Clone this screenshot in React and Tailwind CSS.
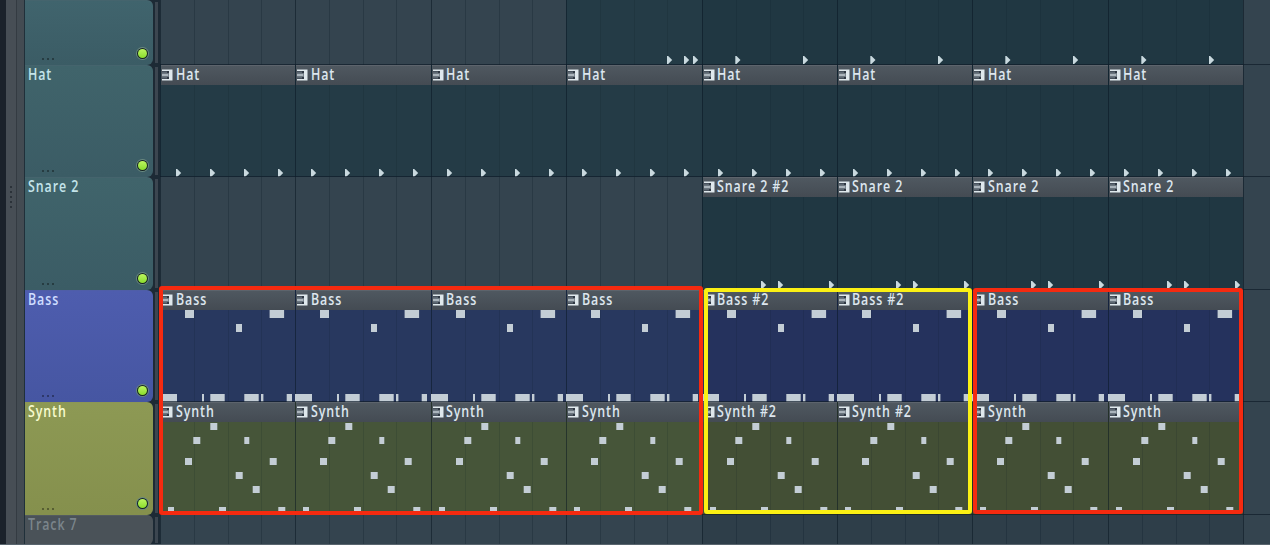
const TRI = { kickA: [101, 118, 127], kick: [33.3, 101], hat: [16, 50, 84, 118], snare: [59, 76, 127] };

const BASS = [
  [25, 20, 9, 8], [109.6, 20, 14.5, 8], [76, 34, 6, 8],
  [0, 104, 17, 8], [42, 104, 2, 8], [50.3, 104, 14.4, 8], [84.3, 104, 14.4, 8], [101, 104, 2.4, 8], [126.7, 104, 5.3, 8],
];

const SYNTH = [
  [50.3, 21, 7, 7], [33.3, 35, 7, 7], [84.3, 35, 5, 7], [25, 56, 7, 7], [109.7, 56, 7, 7],
  [75.7, 70, 7, 7], [92.7, 84, 7, 7], [8, 105, 6, 6], [59, 105, 7, 6], [118.3, 105, 7, 6],
];

const tone = {
  empty: ["bg-transparent", "bg-[#2e3e49]"],
  drum: ["bg-[#243b46]", "bg-[#203742]"],
  bass: ["bg-[#28385f]", "bg-[#25325d]"],
  synth: ["bg-[#465539]", "bg-[#434f35]"],
};

const clips = (kind, names, tris, notes) => names.map((name) => ({ kind, name, tris, notes }));
const blank = (n) => Array.from({ length: n }, () => ({ kind: "empty" }));
const names = (a) => [a, a, a, a, `${a} #2`, `${a} #2`, a, a];

const TRACKS = [
  {
    name: "", height: "h-[65px]", color: "bg-linear-to-b from-[#40646d] to-[#3b5c65]", bottom: true,
    clips: [...blank(3), { kind: "drum", tris: TRI.kickA }, ...clips("drum", [null, null, null, null], TRI.kick)],
  },
  {
    name: "Hat", height: "h-[112px]", color: "bg-linear-to-b from-[#40646b] to-[#3b5c65]", text: "text-[#c4e4ea]",
    clips: clips("drum", Array(8).fill("Hat"), TRI.hat),
  },
  {
    name: "Snare 2", height: "h-[113px]", color: "bg-linear-to-b from-[#40646b] to-[#3b5c65]", text: "text-[#c4e4ea]",
    clips: [...blank(4), ...clips("drum", ["Snare 2 #2", "Snare 2", "Snare 2", "Snare 2"], TRI.snare)],
  },
  {
    name: "Bass", height: "h-[112px]", color: "bg-linear-to-b from-[#4e5dae] to-[#4656a2]", text: "text-[#cfdcff]",
    clips: clips("bass", names("Bass"), null, BASS),
  },
  {
    name: "Synth", height: "h-[113px]", color: "bg-linear-to-b from-[#8d9954] to-[#85904d]", text: "text-[#f7fbce]",
    clips: clips("synth", names("Synth"), null, SYNTH),
  },
  {
    name: "Track 7", height: "h-[30px]", color: "bg-[#4a5258]", text: "text-[#7b858b]", off: true,
    clips: blank(8),
  },
];

function Label({ children, className }) {
  return (
    <span className={`inline-block origin-left scale-x-[0.775] whitespace-nowrap font-['Open_Sans',sans-serif] text-[16px] leading-[16px] font-semibold tracking-[1.2px] ${className}`}>
      {children}
    </span>
  );
}

function PianoIcon() {
  return (
    <svg className="h-[12px] w-[11px] shrink-0" viewBox="0 0 11 12">
      <path d="M0 0.5H10.5V11.5H0Z" fill="#dfe8ec" />
      <path d="M0 2H7V4.2H0ZM0 7.8H7V10H0Z" fill="#2f3843" />
      <path d="M0 4.2H7V7.8H0Z" fill="#59646f" />
      <path d="M0 5.3H6.4V6.7H0Z" fill="#cfd9df" />
      <path d="M0 2.8H5V3.4H0ZM0 8.6H5V9.2H0Z" fill="#8c98a2" />
    </svg>
  );
}

function Led() {
  return (
    <span className="flex size-[13px] items-center justify-center rounded-full border border-[#8fb5a8]/70 bg-[#152422]">
      <span className="size-[9px] rounded-full bg-linear-to-b from-[#bdf55e] to-[#8ade2b]" />
    </span>
  );
}

function TrackHeader({ track }) {
  return (
    <div className={`flex w-[128px] shrink-0 flex-col justify-between rounded-r-[6px] border-t border-white/5 pl-[3px] ${track.color}`}>
      <Label className={track.text}>{track.name}</Label>
      {!track.off && (
        <div className="flex items-end justify-between pr-[4px] pb-[5px]">
          <div className="flex gap-[3px] pl-[14px]">
            {[0, 1, 2].map((i) => <span key={i} className="size-[2px] bg-black/35" />)}
          </div>
          <Led />
        </div>
      )}
    </div>
  );
}

function Clip({ clip, index, bottom }) {
  const late = index >= 4 ? 1 : 0;
  const triTop = bottom ? 56 : 104;
  return (
    <div className={`relative flex w-[135.4px] shrink-0 flex-col ${tone[clip.kind][late]}`}>
      <svg className="absolute inset-0 size-full overflow-visible" shapeRendering="crispEdges">
        {[34, 67.6, 101.3].map((x) => <rect key={x} x={x} y="0" width="1" height="100%" fill="#06141f" fillOpacity={clip.kind === "empty" ? 0.22 : 0.13} />)}
        <rect x="-0.4" y="0" width="1" height="100%" fill="#06141f" fillOpacity="0.5" />
      </svg>
      {clip.name && (
        <div className="relative ml-px flex h-[20px] items-start gap-[2.5px] border-t border-[#5d646c] bg-linear-to-b from-[#4f5860] to-[#444b53] pl-px">
          <span className="flex pt-[3px]"><PianoIcon /></span>
          <Label className="text-[#dde6ee]">{clip.name}</Label>
        </div>
      )}
      {clip.tris && (
        <svg className="absolute inset-0 size-full overflow-visible">
          {clip.tris.map((x) => <path key={x} d={`M${x} ${triTop}h1.2l4 4l-4 4h-1.2z`} fill="#c9d9df" />)}
        </svg>
      )}
      {clip.notes && (
        <svg className="absolute inset-0 size-full overflow-visible">
          {clip.notes.map(([x, y, w, h]) => <rect key={`${x}-${y}`} x={x} y={y} width={w} height={h} fill="#c3cdd5" />)}
        </svg>
      )}
    </div>
  );
}

function Track({ track }) {
  return (
    <div className={`flex shrink-0 ${track.height}`}>
      <TrackHeader track={track} />
      <div className="flex w-[7px] shrink-0 py-[2px] pl-[2px]">
        <div className="w-[3px] bg-[#3c4650]" />
      </div>
      <div className="relative flex flex-1 bg-[#34444f]">
        {track.clips.map((clip, i) => <Clip key={i} clip={clip} index={i} bottom={track.bottom} />)}
        <div className="flex-1 border-l border-[#1c2a35]" />
        <div className="absolute inset-x-0 bottom-0 h-px bg-[#101d29]/70" />
      </div>
    </div>
  );
}

export default function App() {
  return (
    <div className="relative flex h-[545px] w-[1270px] overflow-hidden bg-[#1d2a35]">
      <div className="w-[6px] shrink-0 bg-[#1b222b]" />
      <div className="flex w-[11px] shrink-0 flex-col items-center justify-center gap-[3px] border-r border-[#343b42] bg-[#474e55] pb-[152px]">
        {[0, 1, 2, 3, 4].map((i) => <span key={i} className="size-[2px] bg-[#2b3239]" />)}
      </div>
      <div className="w-[8px] shrink-0 border-r border-[#20303a] bg-[#434b52]" />
      <div className="flex min-w-0 flex-1 flex-col">
        {TRACKS.map((track, i) => <Track key={i} track={track} />)}
      </div>
      <div className="absolute top-[286px] left-[159px] h-[229px] w-[544px] rounded-[3px] border-4 border-[#f52a10]" />
      <div className="absolute top-[288px] left-[973px] h-[226px] w-[270px] rounded-[3px] border-4 border-[#f52a10]" />
      <div className="absolute top-[288px] left-[704px] h-[226px] w-[268px] rounded-[3px] border-4 border-[#fbf014]" />
      <div className="absolute inset-x-0 bottom-0 h-px bg-[#59656e]" />
    </div>
  );
}
